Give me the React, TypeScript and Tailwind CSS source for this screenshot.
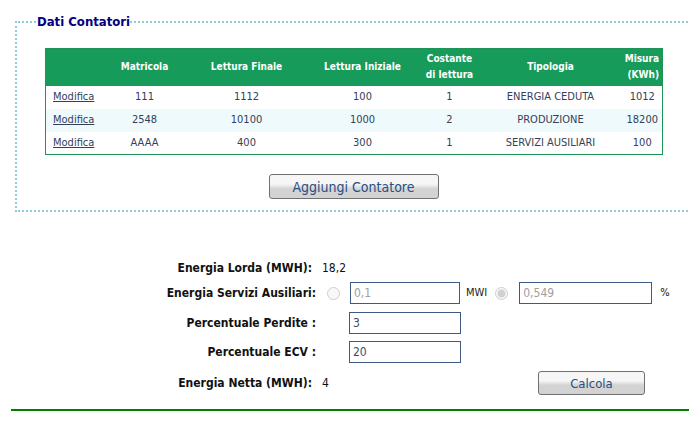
import React from "react";

// ==========================================
// DATI
// ==========================================
const contatori = [
  { matricola: "111", finale: "1112", iniziale: "100", costante: "1", tipologia: "ENERGIA CEDUTA", misura: "1012" },
  { matricola: "2548", finale: "10100", iniziale: "1000", costante: "2", tipologia: "PRODUZIONE", misura: "18200" },
  { matricola: "AAAA", finale: "400", iniziale: "300", costante: "1", tipologia: "SERVIZI AUSILIARI", misura: "100" },
];

const font = { fontFamily: '"DejaVu Sans Condensed", "Liberation Sans", sans-serif' };

const btn =
  "border border-[#707070] rounded-[3px] bg-gradient-to-b from-[#f6f6f6] from-40% to-[#d3d3d3] to-60% text-[#2a4f82] leading-none";

// ==========================================
// COMPONENT
// ==========================================
export default function App() {
  return (
    <div className="w-[689px] h-[423px] overflow-hidden bg-white text-[#222]" style={font}>
      <div className="pt-[15px] pl-[15px]">
        {/* Fieldset: Dati Contatori */}
        <fieldset className="w-[720px] border-2 border-dotted border-[#8fcadd] pl-[28px] pt-[19px] pb-[11px]">
          <legend className="ml-[-8px] px-0 text-[13px] font-bold text-[#000080] leading-[14px]">
            Dati Contatori
          </legend>

          <table className="table-fixed border-collapse border border-[#1b9455] w-[617px] text-[11px] text-[#34405a]">
            <colgroup>
              <col className="w-[55px]" />
              <col className="w-[88px]" />
              <col className="w-[116px]" />
              <col className="w-[116px]" />
              <col className="w-[58px]" />
              <col className="w-[144px]" />
              <col className="w-[40px]" />
            </colgroup>
            <thead>
              <tr className="bg-[#169b5a] text-white text-[10px] h-[37px] leading-[16px]">
                <th className="font-semibold"></th>
                <th className="font-semibold">Matricola</th>
                <th className="font-semibold">Lettura Finale</th>
                <th className="font-semibold">Lettura Iniziale</th>
                <th className="font-semibold">
                  Costante
                  <br />
                  di lettura
                </th>
                <th className="font-semibold">Tipologia</th>
                <th className="font-semibold text-right pr-[3px]">
                  Misura
                  <br />
                  (KWh)
                </th>
              </tr>
            </thead>
            <tbody>
              {contatori.map((c, i) => (
                <tr key={c.matricola} className={`h-[23px] ${i === 1 ? "bg-[#eefafc]" : "bg-white"}`}>
                  <td className="pl-[7px]">
                    <a href="#" className="underline text-[#34405a]">Modifica</a>
                  </td>
                  <td className="text-center">{c.matricola}</td>
                  <td className="text-center">{c.finale}</td>
                  <td className="text-center">{c.iniziale}</td>
                  <td className="text-center">{c.costante}</td>
                  <td className="text-center">{c.tipologia}</td>
                  <td className="text-center">{c.misura}</td>
                </tr>
              ))}
            </tbody>
          </table>

          <div className="w-[617px] flex justify-center mt-[19px]">
            <button className={`${btn} w-[170px] h-[25px] text-[14px]`}>Aggiungi Contatore</button>
          </div>
        </fieldset>
      </div>

      {/* Calcolo energia */}
      <div className="mt-[46px] text-[12px] font-bold text-[#111]">
        <div className="flex items-center h-[20px]">
          <span className="w-[312px] text-right">Energia Lorda (MWH):</span>
          <span className="ml-[10px] font-normal">18,2</span>
        </div>

        <div className="flex items-center h-[22px] mt-[4px]">
          <span className="w-[316px] text-right">Energia Servizi Ausiliari:</span>
          <input type="radio" name="tipo" disabled className="ml-[11px] w-[13px] h-[13px]" />
          <input
            type="text"
            disabled
            defaultValue="0,1"
            className="ml-[10px] w-[110px] h-[22px] border border-[#3d5b82] px-[3px] text-[12px] font-normal text-[#a0a0a0] bg-white"
          />
          <span className="ml-[6px] font-normal text-[11px] text-[#222]">MWI</span>
          <input type="radio" name="tipo" disabled defaultChecked className="ml-[8px] w-[13px] h-[13px]" />
          <input
            type="text"
            disabled
            defaultValue="0,549"
            className="ml-[11px] w-[133px] h-[22px] border border-[#3d5b82] px-[3px] text-[12px] font-normal text-[#a0a0a0] bg-white"
          />
          <span className="ml-[8px] font-normal text-[11px]">%</span>
        </div>

        <div className="flex items-center h-[22px] mt-[8px]">
          <span className="w-[316px] text-right">Percentuale Perdite :</span>
          <input
            type="text"
            defaultValue="3"
            className="ml-[33px] w-[112px] h-[22px] border border-[#3d5b82] px-[3px] text-[12px] font-normal text-[#3a4d6c]"
          />
        </div>

        <div className="flex items-center h-[22px] mt-[7px]">
          <span className="w-[316px] text-right">Percentuale ECV :</span>
          <input
            type="text"
            defaultValue="20"
            className="ml-[33px] w-[112px] h-[22px] border border-[#3d5b82] px-[3px] text-[12px] font-normal text-[#3a4d6c]"
          />
        </div>

        <div className="flex items-center h-[24px] mt-[8px]">
          <span className="w-[312px] text-right">Energia Netta (MWH):</span>
          <span className="ml-[10px] w-[216px] font-normal">4</span>
          <button className={`${btn} w-[107px] h-[24px] text-[13px] font-normal`}>Calcola</button>
        </div>
      </div>

      <hr className="mt-[14px] ml-[11px] border-t-2 border-[#008000]" />
    </div>
  );
}
